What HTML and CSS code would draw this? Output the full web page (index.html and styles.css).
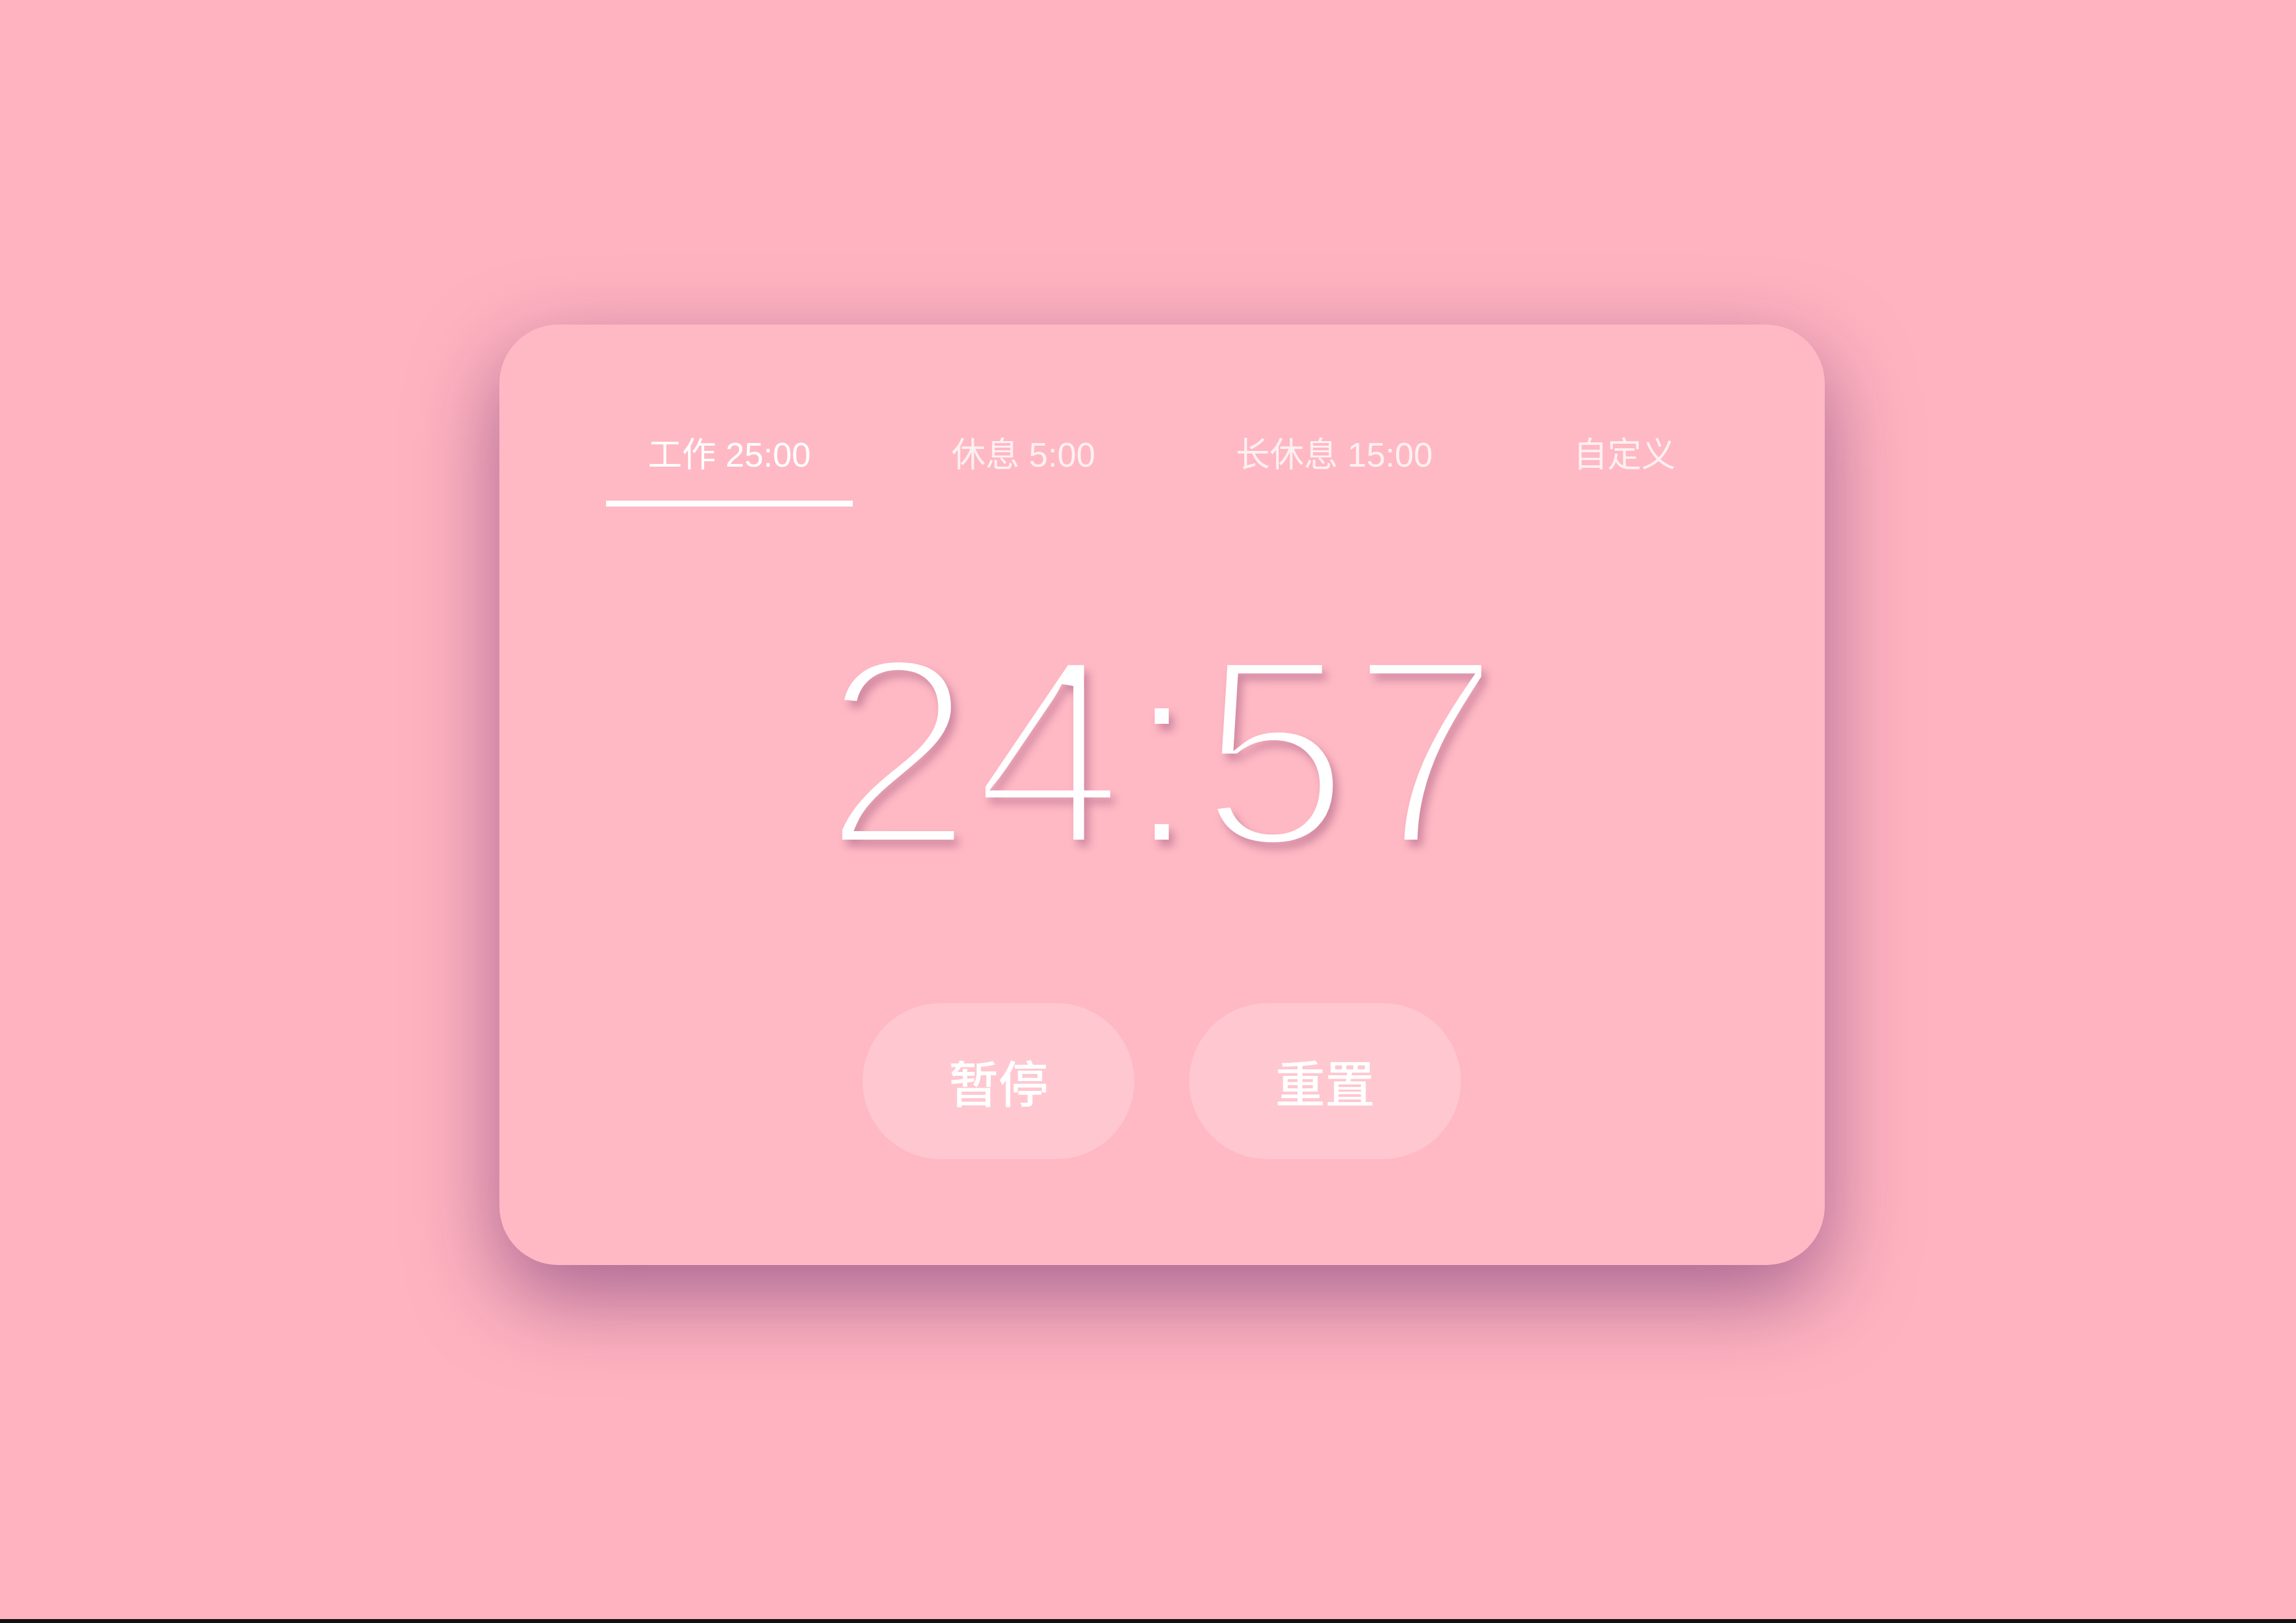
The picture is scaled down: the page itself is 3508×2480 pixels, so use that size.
FILE: index.html
```html
<!DOCTYPE html>
<html lang="zh-CN">
<head>
<meta charset="utf-8">
<title>番茄钟</title>
<link rel="stylesheet" href="styles.css">
</head>
<body>
<main class="stage">
  <section class="card">
    <nav class="tabs">
      <div class="tab active">工作 25:00</div>
      <div class="tab">休息 5:00</div>
      <div class="tab">长休息 15:00</div>
      <div class="tab">自定义</div>
    </nav>
    <div class="timer" data-time="24:57"><span class="digits">24:57</span></div>
    <div class="controls">
      <button class="btn">暂停</button>
      <button class="btn">重置</button>
    </div>
  </section>
</main>
<div class="edge"></div>
</body>
</html>
```
FILE: styles.css
```css
html, body {
  margin: 0;
  padding: 0;
  background: #ffb3c0;
}
body {
  width: 3508px;
  height: 2480px;
  display: flex;
  flex-direction: column;
  overflow: hidden;
  font-family: "Liberation Sans", "Noto Sans CJK SC", sans-serif;
}
.stage {
  flex: 1;
  display: flex;
  justify-content: center;
  align-items: center;
  padding: 0 0 45px 42px;
}
.card {
  width: 2025px;
  box-sizing: border-box;
  background: #ffb9c4;
  border-radius: 90px;
  padding: 169px 0 162px;
  display: flex;
  flex-direction: column;
  align-items: center;
  box-shadow: 0 48px 130px rgba(120, 60, 120, 0.65);
}
.tabs {
  display: flex;
  gap: 87px;
}
.tab {
  padding: 0 64px 40px;
  font-size: 52px;
  line-height: 60px;
  color: rgba(255, 255, 255, 0.78);
  border-bottom: 9px solid transparent;
  white-space: nowrap;
}
.tab.active {
  color: #ffffff;
  border-bottom-color: #ffffff;
}
.timer {
  position: relative;
  margin-top: 183px;
  font-family: "Liberation Sans", "Arial", sans-serif;
  font-weight: 400;
  font-size: 414px;
  line-height: 384px;
  letter-spacing: 0;
  white-space: nowrap;
}
/* thin strokes: a black outline eats into the white glyph, screen blend drops the black */
.digits {
  position: relative;
  display: block;
  color: #ffffff;
  -webkit-text-stroke: 18px #000000;
  mix-blend-mode: screen;
}
/* soft shadow of the same thinned digits */
.timer::before {
  content: attr(data-time);
  position: absolute;
  left: 0;
  top: 0;
  color: rgb(204, 182, 206);
  -webkit-text-stroke: 18px #ffffff;
  mix-blend-mode: multiply;
  filter: blur(7px);
  transform: translate(7px, 10px);
}
.controls {
  margin-top: 192px;
  display: flex;
  gap: 84px;
}
.btn {
  width: 415px;
  height: 238px;
  border: none;
  border-radius: 119px;
  background: #ffc8d0;
  color: #ffffff;
  font-family: "Liberation Sans", "Noto Sans CJK SC", sans-serif;
  font-size: 76px;
  font-weight: 500;
  padding: 0;
}
.edge {
  height: 6px;
  background: #111111;
}
```
